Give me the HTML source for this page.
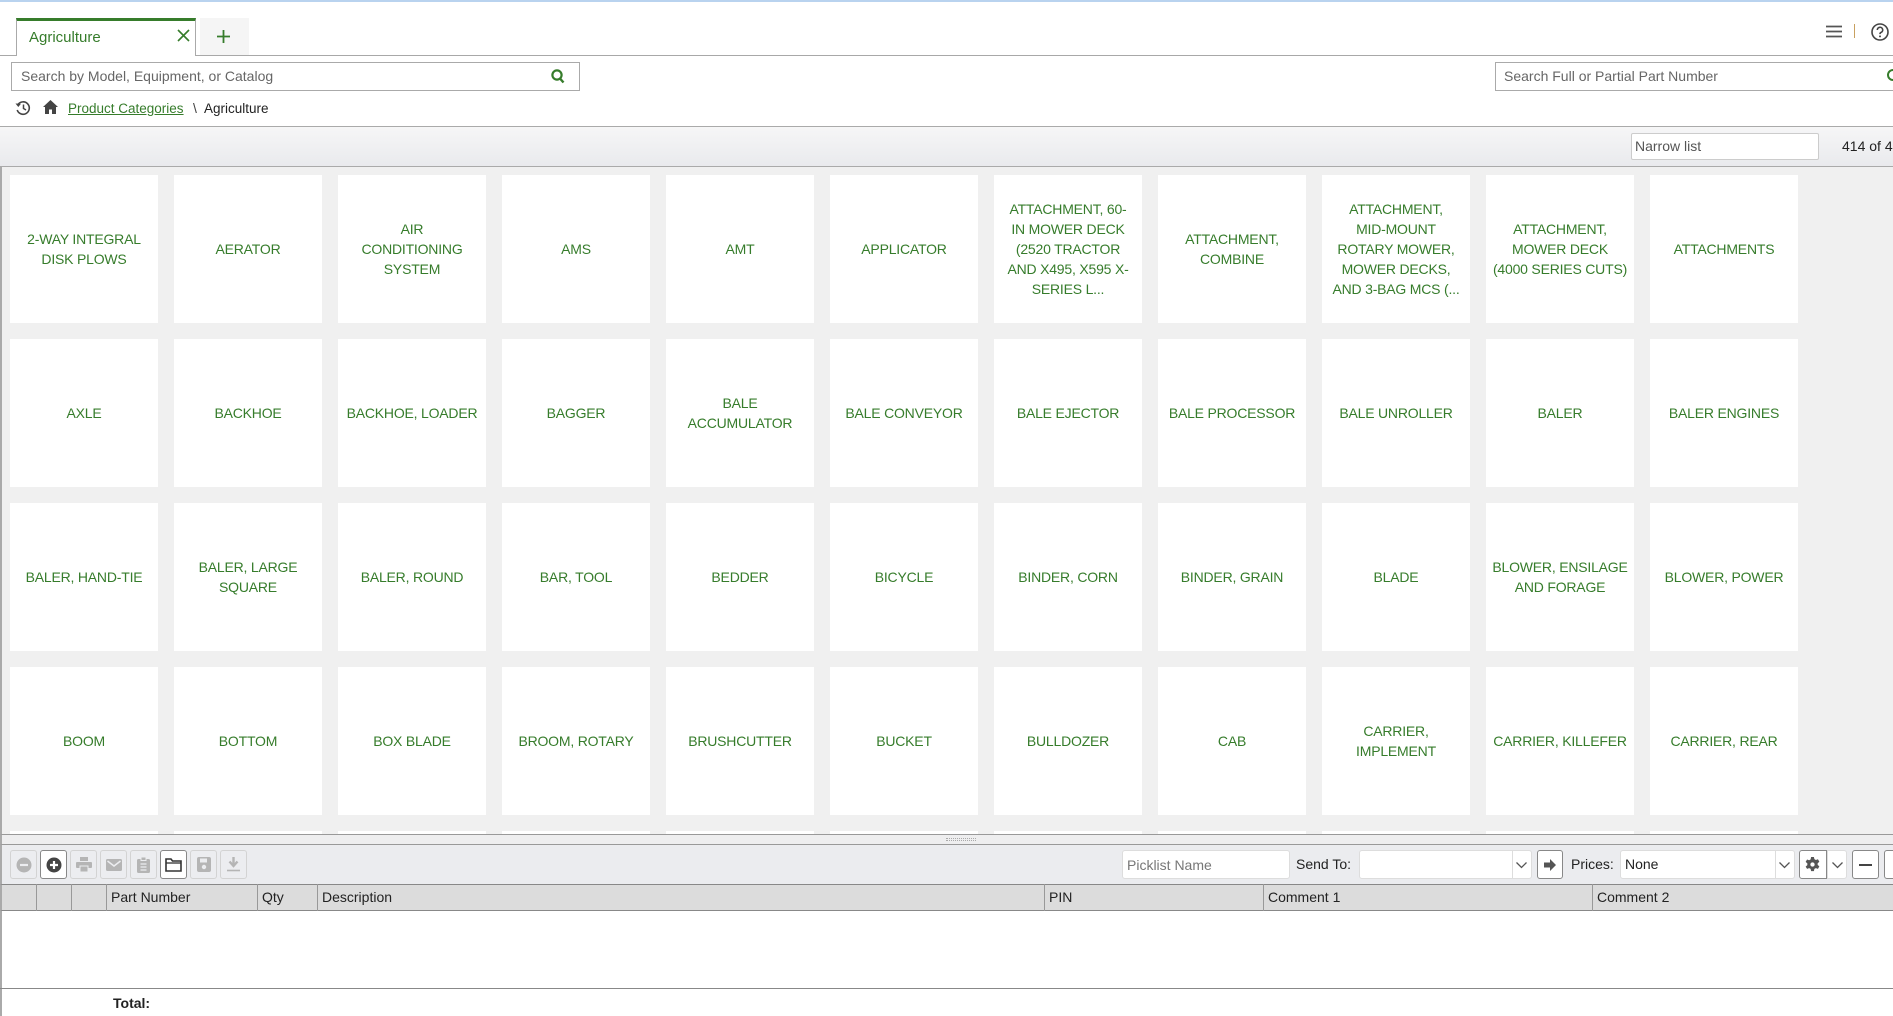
<!DOCTYPE html>
<html><head><meta charset="utf-8"><style>
*{box-sizing:border-box;margin:0;padding:0}
body{width:1893px;height:1016px;overflow:hidden;background:#fff;font-family:"Liberation Sans",sans-serif;position:relative;color:#222}
.abs{position:absolute}
.tile{position:absolute;width:148px;height:148px;background:#fff;display:flex;align-items:center;justify-content:center;text-align:center;color:#367c2b;font-size:14px;line-height:20px;white-space:nowrap;letter-spacing:-0.2px}
.btn{position:absolute;top:850px;width:27px;height:29px;border:1px solid #d3d3d3;border-radius:3px;background:#ecedf0;display:flex;align-items:center;justify-content:center}
.btn.on{border-color:#888;background:#fff}
.th{position:absolute;top:884px;height:27px;font-size:14px;line-height:26px;padding-left:4px;border-left:1px solid #999;color:#222}
</style></head><body>
<div class="abs" style="left:0;top:0;width:1893px;height:2px;background:#b9d3ef"></div>
<!-- tabs -->
<div class="abs" style="left:0;top:55px;width:1893px;height:1px;background:#a8a8a8"></div>
<div class="abs" style="left:16px;top:18px;width:180px;height:38px;background:#fff;border-top:3px solid #367c2b;border-left:1px solid #aaa;border-right:1px solid #aaa"></div>
<div class="abs" style="left:29px;top:29px;font-size:15px;color:#367c2b">Agriculture</div>
<svg class="abs" style="left:177px;top:29px" width="13" height="13" viewBox="0 0 13 13"><path d="M1 1L12 12M12 1L1 12" stroke="#367c2b" stroke-width="1.6"/></svg>
<div class="abs" style="left:200px;top:18px;width:49px;height:37px;background:#f5f5f5"></div>
<svg class="abs" style="left:217px;top:30px" width="13" height="13" viewBox="0 0 13 13"><path d="M6.5 0V13M0 6.5H13" stroke="#367c2b" stroke-width="1.8"/></svg>
<svg class="abs" style="left:1826px;top:25px" width="16" height="13" viewBox="0 0 16 13"><path d="M0 1.5H16M0 6.5H16M0 11.5H16" stroke="#555" stroke-width="1.8"/></svg>
<div class="abs" style="left:1854px;top:24px;width:1px;height:14px;background:#c8a060"></div>
<svg class="abs" style="left:1871px;top:23px" width="18" height="18" viewBox="0 0 18 18"><circle cx="9" cy="9" r="8" fill="none" stroke="#444" stroke-width="1.6"/><path d="M6.3 7a2.7 2.7 0 1 1 3.6 2.5c-.7.3-.9.8-.9 1.6" fill="none" stroke="#444" stroke-width="1.6"/><circle cx="9" cy="13.4" r="1" fill="#444"/></svg>
<!-- search -->
<div class="abs" style="left:11px;top:62px;width:569px;height:29px;border:1px solid #aaa"></div>
<div class="abs" style="left:21px;top:68px;font-size:14px;color:#666">Search by Model, Equipment, or Catalog</div>
<svg class="abs" style="left:551px;top:69px" width="14" height="15" viewBox="0 0 14 15"><circle cx="6" cy="6" r="4.6" fill="none" stroke="#367c2b" stroke-width="2.2"/><path d="M9 9.5L12.5 13.5" stroke="#367c2b" stroke-width="2.4"/></svg>
<div class="abs" style="left:1495px;top:62px;width:420px;height:29px;border:1px solid #aaa"></div>
<div class="abs" style="left:1504px;top:68px;font-size:14px;color:#666">Search Full or Partial Part Number</div>
<div class="abs" style="left:1887px;top:69px;width:12px;height:12px;border:2px solid #367c2b;border-radius:50%"></div>
<!-- breadcrumb -->
<svg class="abs" style="left:15px;top:100px" width="16" height="16" viewBox="0 0 16 16"><path d="M3 4.5A6.2 6.2 0 1 1 2.2 10" fill="none" stroke="#444" stroke-width="1.6"/><path d="M0.5 3.5L3.3 7L6 3.8Z" fill="#444"/><path d="M8.5 4.5V8.5L11 10" fill="none" stroke="#444" stroke-width="1.5"/></svg>
<svg class="abs" style="left:43px;top:100px" width="15" height="14" viewBox="0 0 15 14"><path d="M7.5 0L15 7H13V14H9V9.5H6V14H2V7H0Z" fill="#444"/></svg>
<div class="abs" style="left:68px;top:101px;font-size:13.5px;color:#367c2b;text-decoration:underline">Product Categories</div>
<div class="abs" style="left:193px;top:100px;font-size:14px;color:#444">\</div>
<div class="abs" style="left:204px;top:101px;font-size:13.5px;color:#222">Agriculture</div>
<!-- filter bar -->
<div class="abs" style="left:0;top:126px;width:1893px;height:41px;background:linear-gradient(#f6f6f7,#e9eaed);border-top:1px solid #aaa;border-bottom:1px solid #aaa"></div>
<div class="abs" style="left:1631px;top:133px;width:188px;height:27px;background:#fff;border:1px solid #ccc;border-radius:2px"></div>
<div class="abs" style="left:1635px;top:138px;font-size:14px;color:#555">Narrow list</div>
<div class="abs" style="left:1842px;top:138px;font-size:14px;color:#222;white-space:nowrap">414 of 414</div>
<!-- grid -->
<div class="abs" style="left:0;top:167px;width:1893px;height:667px;background:#f0f0f0;border-left:2px solid #aaa"></div>
<div id="g"></div>
<!-- bottom -->
<div class="abs" style="left:0;top:834px;width:1893px;height:11px;background:#eeeeef;border-top:1px solid #999;border-bottom:1px solid #999;border-left:2px solid #aaa"></div>
<div class="abs" style="left:946px;top:838px;width:30px;height:3px;border-top:1px dotted #aaa;border-bottom:1px dotted #aaa"></div>
<div class="abs" style="left:0;top:845px;width:1893px;height:39px;background:#ebecef;border-left:2px solid #aaa"></div>
<div class="btn" style="left:10px"><svg width="16" height="16"><circle cx="8" cy="8" r="7.5" fill="#b5b5b5"/><path d="M4 8H12" stroke="#ecedf0" stroke-width="2.2"/></svg></div>
<div class="btn on" style="left:40px"><svg width="16" height="16"><circle cx="8" cy="8" r="7.5" fill="#444"/><path d="M4 8H12M8 4V12" stroke="#fff" stroke-width="2.2"/></svg></div>
<div class="btn" style="left:70px"><svg width="16" height="15"><rect x="4" y="0" width="8" height="4" fill="#b5b5b5"/><rect x="0" y="5" width="16" height="6" rx="1" fill="#b5b5b5"/><rect x="4" y="9" width="8" height="6" fill="#b5b5b5" stroke="#ecedf0"/></svg></div>
<div class="btn" style="left:100px"><svg width="16" height="12"><rect width="16" height="12" rx="1.5" fill="#b5b5b5"/><path d="M1.5 2L8 7L14.5 2" fill="none" stroke="#ecedf0" stroke-width="1.5"/></svg></div>
<div class="btn" style="left:130px"><svg width="13" height="16"><rect y="2" width="13" height="14" rx="1.5" fill="#b5b5b5"/><rect x="4" y="0" width="5" height="3.5" fill="#b5b5b5" stroke="#ecedf0"/><path d="M3.5 7H9.5M3.5 10H9.5M3.5 13H9.5" stroke="#ecedf0" stroke-width="1.3"/></svg></div>
<div class="btn on" style="left:160px"><svg width="17" height="14"><path d="M1 1H6L7.5 3H16V13H1Z" fill="none" stroke="#333" stroke-width="1.6"/><path d="M1 5H16" stroke="#333" stroke-width="1.3"/></svg></div>
<div class="btn" style="left:190px"><svg width="14" height="15"><rect width="14" height="15" rx="2" fill="#b5b5b5"/><rect x="3" y="1.5" width="7" height="4" fill="#ecedf0"/><circle cx="7" cy="10" r="2.2" fill="#ecedf0"/></svg></div>
<div class="btn" style="left:220px"><svg width="13" height="15"><path d="M6.5 0V8M2.5 4.5L6.5 9L10.5 4.5" fill="none" stroke="#b5b5b5" stroke-width="2.4"/><path d="M0 13.5H13" stroke="#b5b5b5" stroke-width="1.6"/></svg></div>
<div class="abs" style="left:1122px;top:850px;width:168px;height:29px;background:#fff;border:1px solid #ddd;border-radius:3px"></div>
<div class="abs" style="left:1127px;top:857px;font-size:14px;color:#777">Picklist Name</div>
<div class="abs" style="left:1296px;top:856px;font-size:14px;color:#222">Send To:</div>
<div class="abs" style="left:1359px;top:850px;width:173px;height:29px;background:#fff;border:1px solid #ddd;border-radius:3px"></div>
<div class="abs" style="left:1512px;top:851px;width:1px;height:27px;background:#ddd"></div>
<svg class="abs" style="left:1516px;top:862px" width="11" height="7"><path d="M0.5 0.5L5.5 5.5L10.5 0.5" fill="none" stroke="#555" stroke-width="1.3"/></svg>
<div class="abs" style="left:1537px;top:850px;width:26px;height:29px;background:#fff;border:1px solid #888;border-radius:3px"></div>
<svg class="abs" style="left:1544px;top:859px" width="12" height="12"><path d="M0 3.5H6V0L12 6L6 12V8.5H0Z" fill="#555"/></svg>
<div class="abs" style="left:1571px;top:856px;font-size:14px;color:#222">Prices:</div>
<div class="abs" style="left:1620px;top:850px;width:175px;height:29px;background:#fff;border:1px solid #ddd;border-radius:3px"></div>
<div class="abs" style="left:1625px;top:856px;font-size:14px;color:#222">None</div>
<div class="abs" style="left:1775px;top:851px;width:1px;height:27px;background:#ddd"></div>
<svg class="abs" style="left:1779px;top:862px" width="11" height="7"><path d="M0.5 0.5L5.5 5.5L10.5 0.5" fill="none" stroke="#555" stroke-width="1.3"/></svg>
<div class="abs" style="left:1799px;top:850px;width:28px;height:29px;background:#fff;border:1px solid #888;border-radius:3px 0 0 3px"></div>
<svg class="abs" style="left:1805px;top:857px" width="15" height="15" viewBox="0 0 16 16"><path d="M6.5 0h3l.5 2.3 1.6.9 2.2-.8 1.5 2.6-1.8 1.6v1.8l1.8 1.6-1.5 2.6-2.2-.8-1.6.9-.5 2.3h-3l-.5-2.3-1.6-.9-2.2.8L.7 10.2l1.8-1.6V6.8L.7 5.2 2.2 2.6l2.2.8L6 2.5Z" fill="#555"/><circle cx="8" cy="8" r="2.3" fill="#fff"/></svg>
<div class="abs" style="left:1827px;top:850px;width:20px;height:29px;background:#fff;border:1px solid #ddd;border-radius:0 3px 3px 0"></div>
<svg class="abs" style="left:1832px;top:862px" width="11" height="7"><path d="M0.5 0.5L5.5 5.5L10.5 0.5" fill="none" stroke="#555" stroke-width="1.3"/></svg>
<div class="abs" style="left:1852px;top:850px;width:27px;height:29px;background:#fff;border:1px solid #888;border-radius:3px"></div>
<div class="abs" style="left:1859px;top:864px;width:13px;height:2px;background:#444"></div>
<div class="abs" style="left:1884px;top:850px;width:20px;height:29px;background:#fff;border:1px solid #888;border-radius:3px"></div>
<!-- table -->
<div class="abs" style="left:0;top:884px;width:1893px;height:27px;background:#dcdcdc;border-top:1px solid #888;border-bottom:1px solid #888;border-left:2px solid #aaa"></div>
<div class="th" style="left:36px;width:35px"></div>
<div class="th" style="left:71px;width:35px"></div>
<div class="th" style="left:106px;width:151px">Part Number</div>
<div class="th" style="left:257px;width:60px">Qty</div>
<div class="th" style="left:317px;width:727px">Description</div>
<div class="th" style="left:1044px;width:219px">PIN</div>
<div class="th" style="left:1263px;width:329px">Comment 1</div>
<div class="th" style="left:1592px;width:301px">Comment 2</div>
<div class="abs" style="left:0;top:911px;width:2px;height:105px;background:#aaa"></div>
<div class="abs" style="left:0;top:988px;width:1893px;height:1px;background:#888"></div>
<div class="abs" style="left:113px;top:995px;font-size:14px;font-weight:bold;color:#222">Total:</div>
<script>
(function(){
var L=["2-WAY INTEGRAL<br>DISK PLOWS","AERATOR","AIR<br>CONDITIONING<br>SYSTEM","AMS","AMT","APPLICATOR","ATTACHMENT, 60-<br>IN MOWER DECK<br>(2520 TRACTOR<br>AND X495, X595 X-<br>SERIES L...","ATTACHMENT,<br>COMBINE","ATTACHMENT,<br>MID-MOUNT<br>ROTARY MOWER,<br>MOWER DECKS,<br>AND 3-BAG MCS (...","ATTACHMENT,<br>MOWER DECK<br>(4000 SERIES CUTS)","ATTACHMENTS",
"AXLE","BACKHOE","BACKHOE, LOADER","BAGGER","BALE<br>ACCUMULATOR","BALE CONVEYOR","BALE EJECTOR","BALE PROCESSOR","BALE UNROLLER","BALER","BALER ENGINES",
"BALER, HAND-TIE","BALER, LARGE<br>SQUARE","BALER, ROUND","BAR, TOOL","BEDDER","BICYCLE","BINDER, CORN","BINDER, GRAIN","BLADE","BLOWER, ENSILAGE<br>AND FORAGE","BLOWER, POWER",
"BOOM","BOTTOM","BOX BLADE","BROOM, ROTARY","BRUSHCUTTER","BUCKET","BULLDOZER","CAB","CARRIER,<br>IMPLEMENT","CARRIER, KILLEFER","CARRIER, REAR"];
var h="";for(var r=0;r<5;r++)for(var c=0;c<11;c++){var i=r*11+c;var t=r<4?L[i]:"";var ty=175+r*164;var ht=r<4?148:3;h+='<div class="tile" style="left:'+(10+c*164)+'px;top:'+ty+'px;height:'+ht+'px">'+t+'</div>';}
document.getElementById("g").innerHTML=h;
})();
</script>
</body></html>
